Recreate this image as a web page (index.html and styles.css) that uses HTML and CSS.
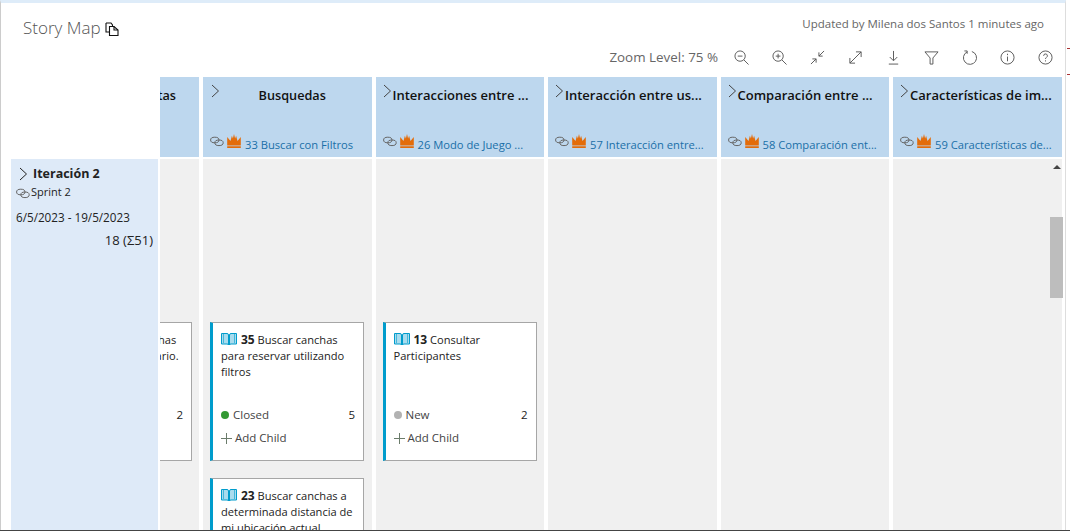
FILE: index.html
```html
<!DOCTYPE html>
<html lang="en">
<head>
<meta charset="utf-8">
<title>Story Map</title>
<link rel="stylesheet" href="styles.css">
</head>
<body>
<svg class="defs" width="0" height="0" aria-hidden="true">
  <symbol id="chev" viewBox="0 0 10 14"><path d="M2 1l6.500 6L2 13" fill="none" stroke="currentColor" stroke-width="1"/></symbol>
  <symbol id="link" viewBox="0 0 14 11"><g fill="none" stroke="#666" stroke-width="1"><ellipse cx="4.800" cy="4" rx="4.200" ry="2.800"/><ellipse cx="9" cy="6.800" rx="4.200" ry="2.800"/></g></symbol>
  <symbol id="crown" viewBox="0 0 14 14"><path d="M.2 3L3.500 7 4.900 1.800 5.900 4.500 7 0 8.100 4.500 9.100 1.800 10.500 7 13.800 3V11.500H.2z M.2 12.200h13.600V14H.2z" fill="#e36c0a"/></symbol>
  <symbol id="book" viewBox="0 0 16 14"><path d="M.5 1.500h5.500q1.500 0 1.500 1.500v10q0-1-1.500-1H.5zM15.500 1.500H10q-1.500 0-1.500 1.500v10q0-1 1.500-1h5.500z" fill="#a9dcee" stroke="#009ccc" stroke-width="1"/><path d="M2.500 1v10M13.500 1v10" stroke="#009ccc" stroke-width=".6"/></symbol>
</svg>
<div class="app">
  <header class="head">
    <div class="title"><h1>Story Map</h1>
      <svg class="copy" width="14" height="14" viewBox="0 0 14 14"><g fill="none" stroke="#111" stroke-width="1.100"><path d="M1 1h5l1.500 2v1M1 1v9h3"/><path d="M4.500 4.500H9l4 3.500v5.500H4.500z"/><path d="M9 4.500V8h4"/></g></svg>
    </div>
    <div class="updated">Updated by Milena dos Santos 1 minutes ago</div>
  </header>
  <div class="toolbar">
    <span class="zoom">Zoom Level: 75 %</span>
    <svg class="tool" viewBox="0 0 16 16"><circle cx="6.500" cy="6.500" r="5.500"/><path d="M10.500 10.500l5 5M4 6.500h5"/></svg>
    <svg class="tool" viewBox="0 0 16 16"><circle cx="6.500" cy="6.500" r="5.500"/><path d="M10.500 10.500l5 5M4 6.500h5M6.500 4v5"/></svg>
    <svg class="tool" viewBox="0 0 16 16"><path d="M9.500 6.500L15 1M9.500 2.500v4h4M6.500 9.500L1 15M2.500 9.500h4v4"/></svg>
    <svg class="tool" viewBox="0 0 16 16"><path d="M2 14L14 2M8.500 2H14v5.500M2 8.500V14h5.500"/></svg>
    <svg class="tool" viewBox="0 0 16 16"><path d="M8 1v10M4 7.500L8 11.500l4-4M3 15h10"/></svg>
    <svg class="tool" viewBox="0 0 16 16"><path d="M1 2h14l-5.500 6.500V15h-3V8.500z"/></svg>
    <svg class="tool" viewBox="0 0 16 16"><path d="M5.500 2A7 7 0 1 0 10.500 1.600M2.500 1H5.500V4"/></svg>
    <svg class="tool" viewBox="0 0 16 16"><circle cx="8" cy="8" r="7"/><path d="M8 7v5M8 4v1.500"/></svg>
    <svg class="tool" viewBox="0 0 16 16"><circle cx="8" cy="8" r="7"/><path d="M6 6.200a2 2 0 1 1 3 1.700c-.7.400-1 .8-1 1.600M8 11v1.200"/></svg>
  </div>
  <main class="board">
    <div class="corner-col">
      <div class="corner"></div>
      <section class="iter">
        <div class="iter-name"><svg class="chev" width="10" height="14"><use href="#chev"/></svg><strong>Iteración 2</strong></div>
        <div class="iter-sprint"><svg width="14" height="11"><use href="#link"/></svg>Sprint 2</div>
        <div class="iter-dates">6/5/2023 - 19/5/2023</div>
        <div class="iter-total">18 (Σ51)</div>
      </section>
    </div>

    <div class="col col-cut">
      <div class="col-head"><div class="col-title center">Consultas</div></div>
      <div class="col-body">
        <article class="card">
          <div class="card-text"><span class="cut-line">Mostrar reservas hechas</span><span class="cut-line">hechas por cada usuario.</span></div>
          <div class="card-state"><i class="dot grey"></i>New<span class="pts">2</span></div>
          <div class="add">Add Child</div>
        </article>
      </div>
    </div>

    <div class="col">
      <div class="col-head">
        <div class="col-title center"><svg class="chev" width="10" height="14"><use href="#chev"/></svg><span>Busquedas</span></div>
        <div class="col-link"><svg width="14" height="11"><use href="#link"/></svg><svg class="crown" width="14" height="14"><use href="#crown"/></svg><a>33 Buscar con Filtros</a></div>
      </div>
      <div class="col-body">
        <article class="card">
          <div class="card-text"><svg class="book" width="16" height="14"><use href="#book"/></svg><b>35</b> Buscar canchas para reservar utilizando filtros</div>
          <div class="card-state"><i class="dot green"></i>Closed<span class="pts">5</span></div>
          <div class="add"><svg class="plus" width="11" height="11" viewBox="0 0 11 11"><path d="M5.500 0v11M0 5.500h11"/></svg>Add Child</div>
        </article>
        <article class="card">
          <div class="card-text"><svg class="book" width="16" height="14"><use href="#book"/></svg><b>23</b> Buscar canchas a determinada distancia de mi ubicación actual</div>
        </article>
      </div>
    </div>

    <div class="col">
      <div class="col-head">
        <div class="col-title"><svg class="chev" width="10" height="14"><use href="#chev"/></svg><span>Interacciones entre ...</span></div>
        <div class="col-link"><svg width="14" height="11"><use href="#link"/></svg><svg class="crown" width="14" height="14"><use href="#crown"/></svg><a>26 Modo de Juego ...</a></div>
      </div>
      <div class="col-body">
        <article class="card">
          <div class="card-text"><svg class="book" width="16" height="14"><use href="#book"/></svg><b>13</b> Consultar Participantes</div>
          <div class="card-state"><i class="dot grey"></i>New<span class="pts">2</span></div>
          <div class="add"><svg class="plus" width="11" height="11" viewBox="0 0 11 11"><path d="M5.500 0v11M0 5.500h11"/></svg>Add Child</div>
        </article>
      </div>
    </div>

    <div class="col">
      <div class="col-head">
        <div class="col-title"><svg class="chev" width="10" height="14"><use href="#chev"/></svg><span>Interacción entre us...</span></div>
        <div class="col-link"><svg width="14" height="11"><use href="#link"/></svg><svg class="crown" width="14" height="14"><use href="#crown"/></svg><a>57 Interacción entre...</a></div>
      </div>
      <div class="col-body"></div>
    </div>

    <div class="col">
      <div class="col-head">
        <div class="col-title"><svg class="chev" width="10" height="14"><use href="#chev"/></svg><span>Comparación entre ...</span></div>
        <div class="col-link"><svg width="14" height="11"><use href="#link"/></svg><svg class="crown" width="14" height="14"><use href="#crown"/></svg><a>58 Comparación ent...</a></div>
      </div>
      <div class="col-body"></div>
    </div>

    <div class="col">
      <div class="col-head">
        <div class="col-title"><svg class="chev" width="10" height="14"><use href="#chev"/></svg><span>Características de im...</span></div>
        <div class="col-link"><svg width="14" height="11"><use href="#link"/></svg><svg class="crown" width="14" height="14"><use href="#crown"/></svg><a>59 Características de...</a></div>
      </div>
      <div class="col-body"></div>
    </div>

    <div class="scrollbar"><i class="arrow"></i><i class="thumb"></i></div>
  </main>
</div>
<div class="mark m1"></div>
<div class="mark m2"></div>
</body>
</html>
```
FILE: styles.css
```css
* { box-sizing: border-box; }
html, body { margin: 0; height: 100%; overflow: hidden; background: #fff; }
body { font-family: "Open Sans", "Noto Sans", sans-serif; font-size: 11.5px; color: #222; }
.defs { position: absolute; }
.app {
  width: 1066px; height: 530px; border-top: 3px solid #deecf9; border-left: 1px solid #ccc; border-right: 1px solid #ddd;
  display: flex; flex-direction: column; overflow: hidden;
}
.head { display: flex; justify-content: space-between; height: 40px; padding: 12px 21px 0 22px; flex: none; }
.title { display: flex; align-items: flex-start; gap: 4px; }
h1 { margin: 0; font-size: 17px; font-weight: 300; line-height: 26px; color: #555; }
.copy { margin-top: 7px; }
.updated { font-size: 11.5px; line-height: 18px; color: #666; }
.toolbar { display: flex; justify-content: flex-end; align-items: center; height: 34px; flex: none; padding: 0 12px 6px 0; gap: 23px; }
.zoom { font-size: 13.4px; color: #666; margin-right: -7px; }
.tool { width: 15px; height: 15px; fill: none; stroke: #555; stroke-width: 1; }
.board { flex: 1; min-height: 0; display: flex; position: relative; overflow: hidden; padding-left: 10px; }
.corner-col { width: 147px; flex: none; display: flex; flex-direction: column; }
.corner { height: 82px; flex: none; }
.iter { flex: 1; background: #deeaf8; padding: 6px 5px 0 5px; }
.iter-name { display: flex; align-items: center; gap: 5px; padding-left: 2px; font-size: 12.5px; line-height: 18px; color: #222; }
.iter-sprint { display: flex; align-items: center; gap: 1px; font-size: 11px; line-height: 17px; }
.iter-sprint svg { margin-top: 3px; }
.iter-dates { font-size: 11.7px; margin-top: 9px; line-height: 17px; }
.iter-total { text-align: right; font-size: 13px; line-height: 17px; margin-top: 6px; }
.col { width: 168.500px; flex: none; margin-right: 4px; display: flex; flex-direction: column; }
.col-cut { width: 39px; margin-left: 2px; margin-right: 4px; overflow: hidden; align-items: flex-end; }
.col-cut .col-head, .col-cut .col-body { width: 170px; flex-shrink: 0; }
.col-cut .col-head { height: 80px; margin-bottom: 2px; }
.col-cut .col-body { padding-left: 0; padding-right: 7px; }
.col-head { height: 80px; margin-bottom: 2px; flex: none; background: #bdd7ee; position: relative; padding: 5px 6px 0 6px; }
.col-title { display: flex; font-size: 13px; font-weight: 600; line-height: 18px; color: #111; height: 50px; padding-top: 4px; white-space: nowrap; }
.col-title .chev { margin: -2px 1px 0 0; color: #444; flex: none; }
.col-title.center { position: relative; justify-content: center; padding-left: 10px; font-size: 12.7px; }
.col-title.center .chev { position: absolute; left: 1px; top: 2px; margin: 0; }
.col-cut .col-title.center { justify-content: flex-end; padding-right: 17px; }
.col-link { display: flex; align-items: center; font-size: 11.2px; line-height: 16px; white-space: nowrap; margin-top: 5px; padding-left: 1px; }
.col-link .crown { margin: -8px 4px 0 3px; flex: none; }
.col-link > svg:first-child { margin-top: -7px; flex: none; }
.col-link a { color: #1a6fa8; }
.col-body { flex: 1; min-height: 0; background: #f0f0f0; padding: 163px 0 0 7px; display: flex; flex-direction: column; gap: 17px; }
.card {
  width: 154px; height: 139px; flex: none; background: #fff; border: 1px solid #a6a6a6; border-left: 3px solid #009ccc;
  padding: 9px 8px 0 8px; display: flex; flex-direction: column;
}
.col-cut .card { border-left-color: #a6a6a6; align-self: flex-end; }
.card-text { font-size: 11.100px; line-height: 16px; height: 71px; color: #222; }
.cut-line { display: block; white-space: nowrap; }
.card-text b { font-weight: 700; color: #222; font-size: 12px; }
.book { vertical-align: -2px; margin-right: 4px; }
.card-state { display: flex; align-items: center; font-size: 11.5px; line-height: 16px; height: 16px; margin-top: 4px; color: #444; }
.dot { width: 8px; height: 8px; border-radius: 50%; margin-right: 4px; flex: none; }
.green { background: #339933; }
.grey { background: #b2b2b2; }
.pts { margin-left: auto; color: #222; }
.add { display: flex; align-items: center; margin-top: 7px; font-size: 11.5px; line-height: 16px; color: #444; }
.plus { fill: none; stroke: #6b7c6b; stroke-width: 1; margin: 0 3px 0 0; flex: none; }
.scrollbar { position: absolute; top: 82px; right: 2px; width: 13px; }
.arrow { display: block; width: 0; height: 0; margin: 6px auto 0; border: 4px solid transparent; border-top: 0; border-bottom: 4px solid #444; }
.thumb { display: block; width: 13px; height: 81px; margin-top: 48px; background: #bdbdbd; }
.mark { position: absolute; left: 1067px; width: 3px; height: 1px; background: #a33; }
.m1 { top: 48px; }
.m2 { top: 74px; }
body::after { content: ""; position: absolute; left: 0; right: 0; top: 530px; height: 1px; background: #444; }
```
